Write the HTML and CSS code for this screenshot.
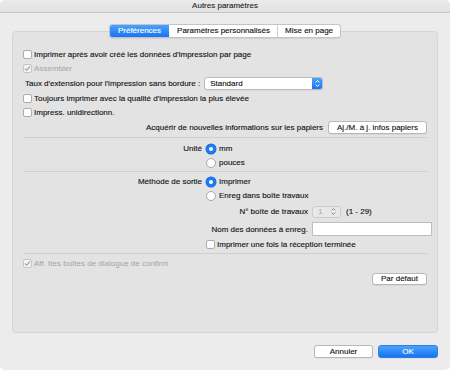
FILE: index.html
```html
<!DOCTYPE html>
<html lang="fr">
<head>
<meta charset="utf-8">
<title>Autres paramètres</title>
<link rel="stylesheet" href="styles.css">
</head>
<body>
<div class="window">
  <div class="titlebar">Autres paramètres</div>
  <div class="content">
    <div class="tabs">
      <div class="tab selected">Préférences</div>
      <div class="tab">Paramètres personnalisés</div>
      <div class="tab">Mise en page</div>
    </div>
    <div class="group">
      <div class="row r-first"><span class="box"></span><span>Imprimer après avoir créé les données d'impression par page</span></div>
      <div class="row r-gap1 disabled"><span class="box checked"><svg viewBox="0 0 9 9" width="9" height="9"><path d="M2 4.6 L3.7 6.3 L7 2.4" fill="none" stroke="#9a9a9a" stroke-width="1.1"/></svg></span><span>Assembler</span></div>
      <div class="row r-gap1 r-tall"><span class="lbl-inline">Taux d'extension pour l'impression sans bordure :</span>
        <div class="popup"><span class="popup-text">Standard</span><span class="popup-arrow"><svg viewBox="0 0 9 11" width="9" height="11"><path d="M2.6 4.4 L4.5 2.6 L6.4 4.4 M2.6 6.6 L4.5 8.4 L6.4 6.6" fill="none" stroke="#fff" stroke-width="1"/></svg></span></div>
      </div>
      <div class="row r-gap1"><span class="box"></span><span>Toujours imprimer avec la qualité d'impression la plus élevée</span></div>
      <div class="row r-gap1"><span class="box"></span><span>Impress. unidirectionn.</span></div>
      <div class="row r-gap2 right"><span>Acquérir de nouvelles informations sur les papiers</span><button class="btn btn-info">Aj./M. à j. infos papiers</button></div>
      <div class="sep s-1"></div>
      <div class="form f-unit">
        <span class="flabel">Unité</span>
        <div class="row"><span class="radio on"></span><span>mm</span></div>
        <span></span>
        <div class="row r-gap1"><span class="radio"></span><span>pouces</span></div>
      </div>
      <div class="sep s-2"></div>
      <div class="form f-out">
        <span class="flabel">Méthode de sortie</span>
        <div class="row"><span class="radio on"></span><span>Imprimer</span></div>
        <span></span>
        <div class="row r-gap1"><span class="radio"></span><span>Enreg dans boîte travaux</span></div>
        <span></span>
        <div class="subform">
          <span class="flabel">N° boîte de travaux</span>
          <div class="row"><div class="stepper"><span>1</span><svg viewBox="0 0 9 11" width="9" height="11"><path d="M2.6 4.4 L4.5 2.6 L6.4 4.4 M2.6 6.6 L4.5 8.4 L6.4 6.6" fill="none" stroke="#8e8e8e" stroke-width="1"/></svg></div><span class="range">(1 - 29)</span></div>
          <span class="flabel">Nom des données à enreg.</span>
          <div class="row r-field"><div class="field"></div></div>
        </div>
        <span></span>
        <div class="row r-gap2"><span class="box"></span><span>Imprimer une fois la réception terminée</span></div>
      </div>
      <div class="sep s-3"></div>
      <div class="row r-aff disabled"><span class="box checked"><svg viewBox="0 0 9 9" width="9" height="9"><path d="M2 4.6 L3.7 6.3 L7 2.4" fill="none" stroke="#9a9a9a" stroke-width="1.1"/></svg></span><span>Aff. ttes boîtes de dialogue de confirm</span></div>
      <div class="row r-gap2 right"><button class="btn btn-default">Par défaut</button></div>
    </div>
    <div class="actions">
      <button class="btn btn-cancel">Annuler</button>
      <button class="btn btn-ok">OK</button>
    </div>
  </div>
</div>
</body>
</html>
```
FILE: styles.css
```css
* { box-sizing: border-box; margin: 0; padding: 0; }
html, body { width: 450px; height: 370px; background: #ffffff; overflow: hidden; }
body {
  font-family: "Liberation Sans", Arial, sans-serif;
  font-size: 8px;
  color: #111111;
  -webkit-text-stroke: 0.12px currentColor;
}
.window {
  width: 450px;
  height: 370px;
  background: #ececec;
  border-radius: 5px;
  overflow: hidden;
  display: flex;
  flex-direction: column;
}
.titlebar {
  height: 13px;
  line-height: 12px;
  text-align: center;
  background: linear-gradient(#ebebeb, #e1e1e1);
  border-bottom: 1px solid #c6c6c6;
  color: #262626;
}
.content {
  flex: 1;
  display: flex;
  flex-direction: column;
  padding: 11px 12px 0;
}
.tabs {
  align-self: center;
  display: flex;
  height: 14px;
  margin-bottom: -7px;
  position: relative;
  z-index: 1;
  background: #ffffff;
  border: 1px solid #c4c4c4;
  border-radius: 3px;
  box-shadow: 0 0.5px 1px rgba(0, 0, 0, 0.08);
  overflow: hidden;
}
.tab {
  padding: 0 7px;
  line-height: 12px;
  white-space: nowrap;
}
.tab + .tab { border-left: 1px solid #d2d2d2; }
.tab.selected {
  background: linear-gradient(#4aa2fd, #1a74f0);
  color: #ffffff;
  padding: 0 8px;
}
.tab.selected + .tab { border-left-color: transparent; }
.group {
  height: 302px;
  background: #e3e3e3;
  border: 1px solid #d5d5d5;
  border-radius: 4px;
  padding: 16px 10px 0;
  display: flex;
  flex-direction: column;
}
.row {
  display: flex;
  align-items: center;
  height: 13px;
  white-space: nowrap;
  gap: 2px;
}
.r-gap1 { margin-top: 1px; }
.r-gap2 { margin-top: 2px; }
.r-tall { height: 15px; gap: 4px; padding-left: 2px; }
.right { justify-content: flex-end; gap: 5px; }
.disabled { color: #a3a3a3; -webkit-text-stroke: 0; }
.box {
  width: 9px;
  height: 9px;
  flex: none;
  background: #ffffff;
  border: 1px solid #acacac;
  border-radius: 2px;
  display: flex;
  align-items: center;
  justify-content: center;
}
.box svg { display: block; margin: -1px; }
.box.checked { background: #f4f4f4; border-color: #c6c6c6; }
.radio {
  width: 10px;
  height: 10px;
  flex: none;
  border-radius: 50%;
  background: #ffffff;
  border: 1px solid #a8a8a8;
  margin-right: 1px;
}
.radio.on {
  border: 3px solid #1c7bf3;
  background: #ffffff;
  box-shadow: 0 0 0 0.5px #1467d8;
}
.popup {
  width: 119px;
  height: 13px;
  display: flex;
  background: #ffffff;
  border: 1px solid #bcbcbc;
  border-radius: 3px;
  overflow: hidden;
  box-shadow: 0 0.5px 0.5px rgba(0, 0, 0, 0.08);
}
.popup-text { flex: 1; padding-left: 5px; line-height: 11px; }
.popup-arrow {
  width: 10px;
  background: linear-gradient(#4aa2fd, #1a74f0);
  display: flex;
  align-items: center;
  justify-content: center;
}
.popup-arrow svg { display: block; }
.btn {
  font-family: inherit;
  font-size: 8px;
  color: #111111;
  -webkit-text-stroke: 0.12px currentColor;
  background: #ffffff;
  border: 1px solid #b8b8b8;
  border-radius: 3px;
  height: 13px;
  line-height: 11px;
  text-align: center;
  box-shadow: 0 0.5px 0.5px rgba(0, 0, 0, 0.1);
}
.btn-info { width: 99px; }
.btn-default { width: 55px; height: 12px; line-height: 10px; }
.sep { height: 1px; background: #cfcfcf; }
.s-1 { margin-top: 3px; }
.s-2 { margin-top: 2px; }
.s-3 { margin-top: 2px; }
.form {
  display: grid;
  grid-template-columns: 179px 1fr;
  column-gap: 4px;
  align-items: center;
}
.f-unit { margin-top: 4px; }
.f-out { margin-top: 3px; }
.flabel { text-align: right; white-space: nowrap; }
.subform {
  display: grid;
  grid-template-columns: 102px 1fr;
  column-gap: 4px;
  row-gap: 4px;
  align-items: center;
  margin-top: 3px;
}
.stepper {
  width: 29px;
  height: 12px;
  border: 1px solid #cbcbcb;
  border-radius: 3px;
  background: #e8e8e8;
  display: flex;
  align-items: center;
  justify-content: space-between;
  padding: 0 2px 0 5px;
  color: #a8a8a8;
  -webkit-text-stroke: 0;
}
.stepper svg { display: block; }
.range { margin-left: 3px; }
.r-field { height: 14px; }
.field {
  width: 120px;
  height: 14px;
  background: #ffffff;
  border: 1px solid #bdbdbd;
}
.r-aff { margin-top: 3px; }
.actions {
  display: flex;
  justify-content: flex-end;
  gap: 5px;
  margin-top: 12px;
}
.btn-cancel { width: 59px; }
.btn-ok {
  width: 60px;
  background: linear-gradient(#4aa2fd, #1a74f0);
  border-color: #2a7ee8;
  color: #ffffff;
}
```
